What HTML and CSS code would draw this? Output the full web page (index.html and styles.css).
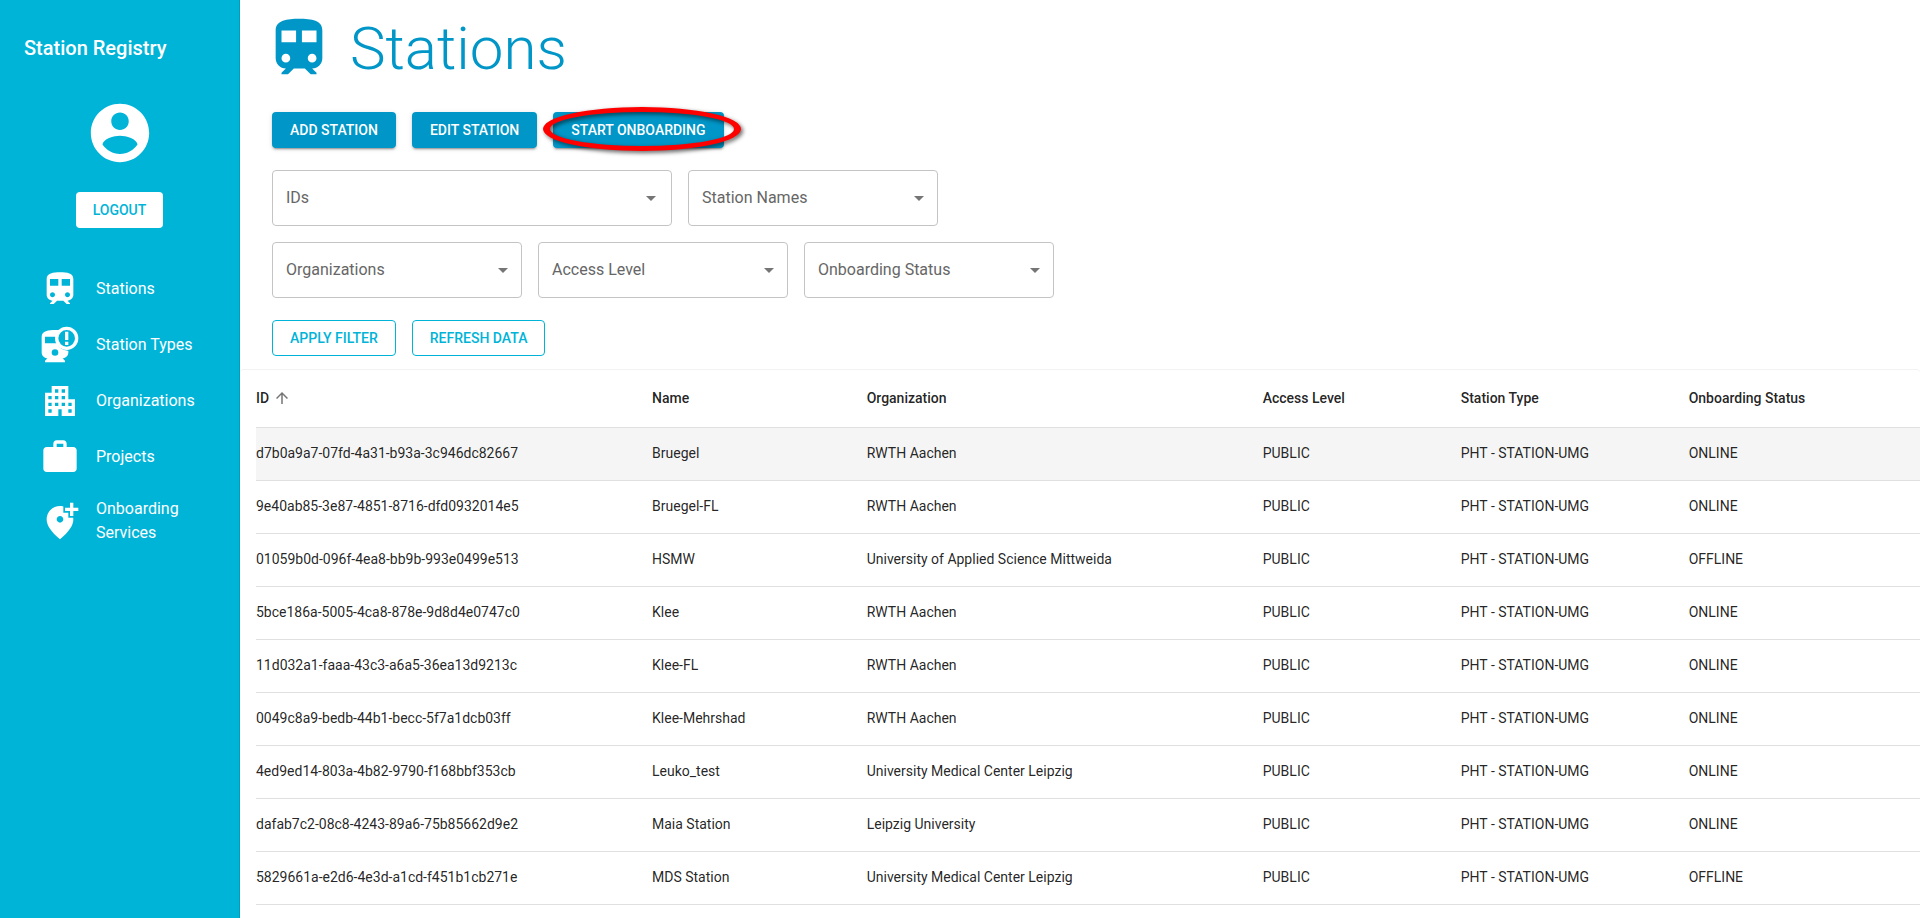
FILE: index.html
```html
<!DOCTYPE html>
<html lang="en">
<head>
<meta charset="utf-8">
<title>Station Registry</title>
<link rel="stylesheet" href="styles.css">
</head>
<body>
<svg class="defs" aria-hidden="true">
  <symbol id="train" viewBox="0 0 24 24"><path d="M12 2c-4 0-8 .5-8 4v9.5C4 17.43 5.57 19 7.5 19L6 20.5v.5h2.23l2-2H14l2 2h2v-.5L16.5 19c1.93 0 3.5-1.57 3.5-3.5V6c0-3.5-3.58-4-8-4zM7.5 17c-.83 0-1.5-.67-1.5-1.5S6.67 14 7.5 14s1.5.67 1.5 1.5S8.33 17 7.5 17zm3.5-7H6V6h5v4zm2 0V6h5v4h-5zm3.5 7c-.83 0-1.5-.67-1.5-1.5s.67-1.5 1.5-1.5 1.5.67 1.5 1.5-.67 1.5-1.5 1.5z"/></symbol>
</svg>
<div class="app">
  <aside class="sidebar">
    <h2 class="brand">Station Registry</h2>
    <div class="account">
      <svg class="avatar" viewBox="0 0 24 24" aria-hidden="true"><path d="M12 2C6.48 2 2 6.48 2 12s4.480 10 10 10 10-4.480 10-10S17.520 2 12 2zm0 3c1.660 0 3 1.340 3 3s-1.340 3-3 3-3-1.340-3-3 1.340-3 3-3zm0 14.200c-2.500 0-4.710-1.280-6-3.220.030-1.990 4-3.080 6-3.080 1.990 0 5.970 1.090 6 3.080-1.290 1.940-3.500 3.220-6 3.220z"/></svg>
      <button class="btn btn-light" type="button">Logout</button>
    </div>
    <nav class="nav">
      <a class="nav-item" href="#stations"><svg class="nav-icon" aria-hidden="true"><use href="#train"/></svg><span class="nav-label">Stations</span></a>
      <a class="nav-item" href="#types"><svg class="nav-icon" viewBox="0 0 24 24" aria-hidden="true"><path fill-rule="evenodd" d="M12.300 3.200C11.600 3.050 10.800 3 9.500 3 5 3 1 3.500 1 7v9.500C1 18.430 2.570 20 4.500 20L3 21.500v.8h12v-.8L13.500 20c1.930 0 3.500-1.570 3.500-3.500v-1.100A7 7 0 0 1 10.100 11H3V7h7.100a7 7 0 0 1 2.200-3.800zM9 14.500a2 2 0 1 0 0 4 2 2 0 0 0 0-4z"/><path fill-rule="evenodd" d="M16 1a7 7 0 1 0 0 14 7 7 0 0 0 0-14zm0 2a5 5 0 1 1 0 10 5 5 0 0 1 0-10z"/><path d="M15 4h2v5h-2zm0 6h2v2h-2z"/></svg><span class="nav-label">Station Types</span></a>
      <a class="nav-item" href="#organizations"><svg class="nav-icon" viewBox="0 0 24 24" aria-hidden="true"><path d="M17 11V3H7v4H3v14h8v-4h2v4h8V11h-4zM7 19H5v-2h2v2zm0-4H5v-2h2v2zm0-4H5V9h2v2zm4 4H9v-2h2v2zm0-4H9V9h2v2zm0-4H9V5h2v2zm4 8h-2v-2h2v2zm0-4h-2V9h2v2zm0-4h-2V5h2v2zm4 12h-2v-2h2v2zm0-4h-2v-2h2v2z"/></svg><span class="nav-label">Organizations</span></a>
      <a class="nav-item" href="#projects"><svg class="nav-icon" viewBox="0 0 24 24" aria-hidden="true"><path d="M20 6h-4V4c0-1.110-.89-2-2-2h-4c-1.110 0-2 .89-2 2v2H4c-1.110 0-1.990.89-1.990 2L2 19c0 1.110.89 2 2 2h16c1.110 0 2-.89 2-2V8c0-1.110-.89-2-2-2zm-6 0h-4V4h4v2z"/></svg><span class="nav-label">Projects</span></a>
      <a class="nav-item" href="#onboarding"><svg class="nav-icon" viewBox="0 0 24 24" aria-hidden="true"><path d="M20 1v3h3v2h-3v3h-2V6h-3V4h3V1h2zm-8 12c1.100 0 2-.9 2-2s-.9-2-2-2-2 .9-2 2 .9 2 2 2zm2-9.750V7h3v3h2.920c.05.390.080.790.080 1.200 0 3.320-2.670 7.250-8 11.800-5.330-4.550-8-8.480-8-11.800C4 6.220 7.800 3 12 3c.68 0 1.350.080 2 .250z"/></svg><span class="nav-label">Onboarding Services</span></a>
    </nav>
  </aside>
  <main class="main">
    <header class="page-head">
      <svg class="page-icon" aria-hidden="true"><use href="#train"/></svg>
      <h1 class="page-title">Stations</h1>
    </header>
    <div class="actions">
      <button class="btn btn-primary" type="button">Add Station</button>
      <button class="btn btn-primary" type="button">Edit Station</button>
      <div class="marked">
        <button class="btn btn-primary" type="button">Start Onboarding</button>
        <span class="marker"></span>
      </div>
    </div>
    <form class="filters">
      <div class="filter-row">
        <div class="field field-wide"><select aria-label="IDs"><option>IDs</option></select></div>
        <div class="field"><select aria-label="Station Names"><option>Station Names</option></select></div>
      </div>
      <div class="filter-row">
        <div class="field"><select aria-label="Organizations"><option>Organizations</option></select></div>
        <div class="field"><select aria-label="Access Level"><option>Access Level</option></select></div>
        <div class="field"><select aria-label="Onboarding Status"><option>Onboarding Status</option></select></div>
      </div>
      <div class="filter-buttons">
        <button class="btn btn-outline" type="button">Apply Filter</button>
        <button class="btn btn-outline" type="button">Refresh Data</button>
      </div>
    </form>
    <section class="card">
      <table class="stations">
        <colgroup><col class="c-id"><col class="c-name"><col class="c-org"><col class="c-access"><col class="c-type"><col class="c-status"></colgroup>
        <thead>
          <tr><th aria-sort="ascending"><span class="sorted">ID<svg class="arrow" viewBox="0 0 24 24" aria-hidden="true"><path d="M4 12l1.410 1.410L11 7.830V20h2V7.830l5.580 5.590L20 12l-8-8-8 8z"/></svg></span></th><th>Name</th><th>Organization</th><th>Access Level</th><th>Station Type</th><th>Onboarding Status</th></tr>
        </thead>
        <tbody>
          <tr class="active"><td>d7b0a9a7-07fd-4a31-b93a-3c946dc82667</td><td>Bruegel</td><td>RWTH Aachen</td><td>PUBLIC</td><td>PHT - STATION-UMG</td><td>ONLINE</td></tr>
          <tr><td>9e40ab85-3e87-4851-8716-dfd0932014e5</td><td>Bruegel-FL</td><td>RWTH Aachen</td><td>PUBLIC</td><td>PHT - STATION-UMG</td><td>ONLINE</td></tr>
          <tr><td>01059b0d-096f-4ea8-bb9b-993e0499e513</td><td>HSMW</td><td>University of Applied Science Mittweida</td><td>PUBLIC</td><td>PHT - STATION-UMG</td><td>OFFLINE</td></tr>
          <tr><td>5bce186a-5005-4ca8-878e-9d8d4e0747c0</td><td>Klee</td><td>RWTH Aachen</td><td>PUBLIC</td><td>PHT - STATION-UMG</td><td>ONLINE</td></tr>
          <tr><td>11d032a1-faaa-43c3-a6a5-36ea13d9213c</td><td>Klee-FL</td><td>RWTH Aachen</td><td>PUBLIC</td><td>PHT - STATION-UMG</td><td>ONLINE</td></tr>
          <tr><td>0049c8a9-bedb-44b1-becc-5f7a1dcb03ff</td><td>Klee-Mehrshad</td><td>RWTH Aachen</td><td>PUBLIC</td><td>PHT - STATION-UMG</td><td>ONLINE</td></tr>
          <tr><td>4ed9ed14-803a-4b82-9790-f168bbf353cb</td><td>Leuko_test</td><td>University Medical Center Leipzig</td><td>PUBLIC</td><td>PHT - STATION-UMG</td><td>ONLINE</td></tr>
          <tr><td>dafab7c2-08c8-4243-89a6-75b85662d9e2</td><td>Maia Station</td><td>Leipzig University</td><td>PUBLIC</td><td>PHT - STATION-UMG</td><td>ONLINE</td></tr>
          <tr><td>5829661a-e2d6-4e3d-a1cd-f451b1cb271e</td><td>MDS Station</td><td>University Medical Center Leipzig</td><td>PUBLIC</td><td>PHT - STATION-UMG</td><td>OFFLINE</td></tr>
        </tbody>
      </table>
    </section>
  </main>
</div>
</body>
</html>
```

FILE: styles.css
```css
* { box-sizing: border-box; }

body {
  margin: 0;
  background: #fff;
  color: rgba(0, 0, 0, 0.87);
  font-family: Roboto, "Liberation Sans", sans-serif;
  font-size: 14px;
}

.defs { display: none; }

.app {
  display: flex;
  min-height: 100vh;
}

/* Sidebar */
.sidebar {
  flex: 0 0 240px;
  background: #00b4d8;
  border-right: 1px solid rgba(0, 0, 0, 0.12);
  color: #fff;
}

.brand {
  margin: 0;
  padding: 32px 24px;
  font-size: 20px;
  font-weight: 500;
  line-height: 32px;
}

.account {
  display: flex;
  flex-direction: column;
  align-items: center;
  gap: 24px;
}

.avatar {
  width: 70px;
  height: 70px;
  margin-top: 2px;
  fill: currentColor;
}

.nav {
  padding: 33px 24px 0 40px;
}

.nav-item {
  display: flex;
  align-items: center;
  gap: 16px;
  min-height: 56px;
  padding: 8px 0;
  color: inherit;
  font-size: 16px;
  line-height: 24px;
  text-decoration: none;
}

.nav-label { margin: 4px 0; }

.nav-icon {
  flex: none;
  width: 40px;
  height: 40px;
  fill: currentColor;
}

/* Buttons */
.btn {
  height: 36px;
  padding: 0 18px;
  border: 0;
  border-radius: 4px;
  font: 500 14px/24px Roboto, "Liberation Sans", sans-serif;
  text-transform: uppercase;
  white-space: nowrap;
}

.btn-light {
  padding: 0 17px;
  background: #fff;
  color: #00b4d8;
}

.btn-primary {
  background: #0096c7;
  color: #fff;
  box-shadow: 0 3px 1px -2px rgba(0, 0, 0, 0.2), 0 2px 2px rgba(0, 0, 0, 0.14), 0 1px 5px rgba(0, 0, 0, 0.12);
}

.btn-outline {
  padding: 0 17px;
  border: 1px solid #00b4d8;
  background: transparent;
  color: #00b4d8;
}

/* Main column */
.main {
  flex: 1;
  min-width: 0;
}

.page-head {
  display: flex;
  align-items: center;
  gap: 16px;
  height: 96px;
  padding-left: 24px;
  color: #0096c7;
}

.page-icon {
  width: 70px;
  height: 70px;
  fill: currentColor;
}

.page-title {
  margin: 0;
  padding-top: 2px;
  font-size: 60px;
  font-weight: 300;
  line-height: 72px;
}

.actions {
  display: flex;
  gap: 16px;
  padding: 16px 32px 22px;
}

.marked { position: relative; }

.marker {
  position: absolute;
  inset: -5px -17px -3px -10px;
  border: solid #f00;
  border-width: 5px 7px;
  border-radius: 50%;
  filter: drop-shadow(2px 2px 2px rgba(0, 0, 0, 0.6));
  pointer-events: none;
}

.filters {
  display: flex;
  flex-direction: column;
  gap: 16px;
  padding: 0 32px 13px;
}

.filter-row {
  display: flex;
  gap: 16px;
}

.field {
  position: relative;
  width: 250px;
}

.field-wide { width: 400px; }

.field::after {
  content: "";
  position: absolute;
  top: 26px;
  right: 14px;
  border: 5px solid transparent;
  border-top-color: #757575;
  border-bottom: 0;
  pointer-events: none;
}

.field-wide::after { right: 16px; }

.field select {
  appearance: none;
  width: 100%;
  height: 56px;
  padding: 0 40px 0 13px;
  border: 1px solid #c4c4c4;
  border-radius: 4px;
  background: #fff;
  color: #666;
  font: 16px/24px Roboto, "Liberation Sans", sans-serif;
}

.filter-buttons {
  display: flex;
  gap: 16px;
  padding-top: 6px;
}

/* Table */
.card {
  padding: 0 0 16px 16px;
  border-top: 1px solid #f2f2f2;
  border-radius: 4px;
}

.stations {
  width: 100%;
  border-collapse: collapse;
  table-layout: fixed;
}

.c-id { width: 23.8%; }
.c-name { width: 12.9%; }
.c-org { width: 23.8%; }
.c-access { width: 11.9%; }
.c-type { width: 13.7%; }

.stations th,
.stations td {
  height: 53px;
  padding: 0 0 2px;
  border-bottom: 1px solid #e0e0e0;
  font-weight: 400;
  line-height: 20px;
  text-align: left;
}

.stations th {
  height: 57px;
  padding: 0;
  font-weight: 500;
}

.sorted {
  display: inline-flex;
  align-items: center;
  gap: 4px;
}

.arrow {
  width: 18px;
  height: 18px;
  fill: #757575;
}

.active { background: #f5f5f5; }
```
